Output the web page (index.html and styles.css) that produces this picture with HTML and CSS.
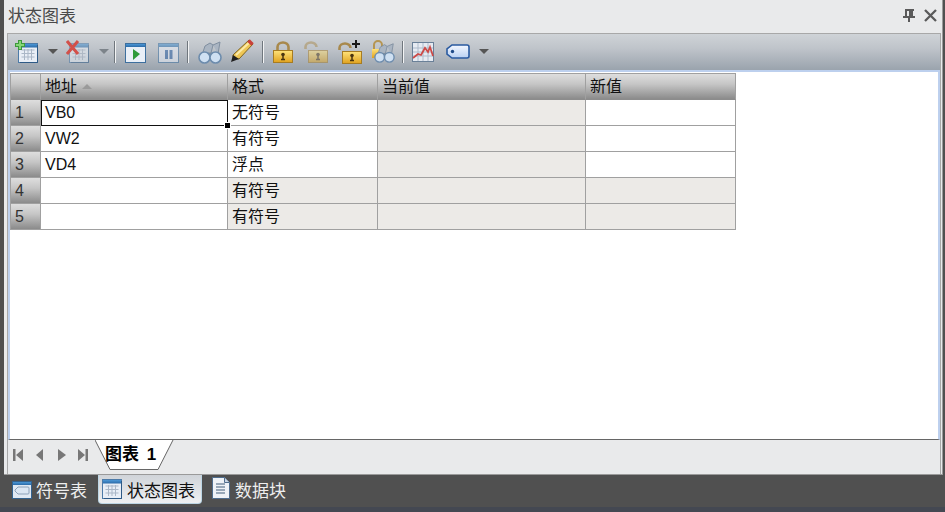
FILE: index.html
```html
<!DOCTYPE html>
<html lang="zh">
<head>
<meta charset="utf-8">
<title>状态图表</title>
<link rel="stylesheet" href="styles.css">
</head>
<body>
<svg class="defs" width="0" height="0">
  <defs>
    <linearGradient id="barBlue" x1="0" y1="0" x2="0" y2="1"><stop offset="0" stop-color="#4b97d6"/><stop offset="1" stop-color="#2a6aa8"/></linearGradient>
    <linearGradient id="gold" x1="0" y1="0" x2="0" y2="1"><stop offset="0" stop-color="#ffe27a"/><stop offset="1" stop-color="#e0a21e"/></linearGradient>
    <linearGradient id="tag" x1="0" y1="0" x2="0" y2="1"><stop offset="0" stop-color="#f4f8ff"/><stop offset="1" stop-color="#b9d0f2"/></linearGradient>
    <symbol id="grid" viewBox="0 0 20 20">
      <rect x="0.5" y="0.5" width="19" height="19" fill="#e8eef6" stroke="#4d7ba8"/>
      <rect x="1" y="1" width="18" height="3.500" fill="url(#barBlue)"/>
      <path d="M3.500 7h13M3.500 10.500h13M3.500 14h13M6.500 6v11M10 6v11M13.500 6v11" stroke="#aab7c7" fill="none"/>
      <path d="M19.500 2v17.500H2" stroke="#2e5a86" fill="none"/>
    </symbol>
    <symbol id="lock" viewBox="0 0 20 22">
      <path d="M4.500 10V6a5.500 4.500 0 0 1 11 0v4" fill="none" stroke="#a8894c" stroke-width="2.600"/>
      <rect x="0.500" y="9.500" width="19" height="12" fill="url(#gold)" stroke="#a77c22"/>
      <circle cx="10" cy="13.500" r="1.800" fill="#4a3410"/>
      <path d="M10 14v4M8 18.500h4" stroke="#4a3410" stroke-width="1.500"/>
    </symbol>
    <symbol id="openlock" viewBox="0 0 24 22">
      <path d="M1.500 8V6a5.500 4.500 0 0 1 11 0" fill="none" stroke="#a8894c" stroke-width="2.600"/>
      <rect x="4.500" y="9.500" width="19" height="12" fill="url(#gold)" stroke="#a77c22"/>
      <circle cx="14" cy="13.500" r="1.800" fill="#4a3410"/>
      <path d="M14 14v4M12 18.500h4" stroke="#4a3410" stroke-width="1.500"/>
    </symbol>
    <symbol id="binoc" viewBox="0 0 24 24">
      <path d="M4 15 7 6l5-3 3 2-2 8M20 14l2-12-7 3" fill="#aab5c2" stroke="#7f8e9f"/>
      <path d="M9 14h6" stroke="#7f8e9f" stroke-width="3"/>
      <circle cx="6.500" cy="17.500" r="5.500" fill="#cfe0f2" stroke="#6d8cad" stroke-width="1.600"/>
      <circle cx="17.500" cy="17.500" r="5.500" fill="#cfe0f2" stroke="#6d8cad" stroke-width="1.600"/>
    </symbol>
  </defs>
</svg>

<main class="panel">
  <header class="title-bar">
    <span class="title">状态图表</span>
    <span class="win-btns">
      <svg class="win-icon" viewBox="0 0 12 13"><path d="M2 0h9v2h-1v5h2v2H7v4H5V9H0V7h2V2H2zM4 2v5h2V2z" fill="#5a5a5a" fill-rule="evenodd"/></svg>
      <svg class="win-icon close" viewBox="0 0 13 13"><path d="M1 1l11 11M12 1 1 12" stroke="#5a5a5a" stroke-width="2.300"/></svg>
    </span>
  </header>

  <div class="frame">
    <div class="toolbar">
      <svg class="tb tb-add" viewBox="0 0 24 24"><use href="#grid" x="3" y="3" width="20" height="20"/><path d="M5 0v10M0 5h10" stroke="#3c9a3c" stroke-width="4"/><path d="M5 1v8M1 5h8" stroke="#86d676" stroke-width="2"/></svg>
      <span class="caret"></span>
      <svg class="tb tb-del" viewBox="0 0 24 24"><g opacity=".55"><use href="#grid" x="3" y="3" width="20" height="20"/></g><path d="M1 1l11 13M12 1 1 14" stroke="#d2504a" stroke-width="3"/></svg>
      <span class="caret dim"></span>
      <span class="sep sep-first"></span>
      <svg class="tb tb-run" viewBox="0 0 21 20"><rect x=".5" y=".5" width="20" height="19" fill="#e9eff7" stroke="#3d6f9e"/><rect x="1" y="1" width="19" height="3" fill="url(#barBlue)"/><path d="M8 6l7 5-7 6z" fill="#2e9a3a"/></svg>
      <svg class="tb tb-pause" viewBox="0 0 21 20"><g opacity=".55"><rect x=".5" y=".5" width="20" height="19" fill="#e9eff7" stroke="#3d6f9e"/><rect x="1" y="1" width="19" height="3" fill="url(#barBlue)"/><path d="M7 7h3v9H7zM11.500 7h3v9h-3z" fill="#2d62a3"/></g></svg>
      <span class="sep"></span>
      <svg class="tb tb-bin" viewBox="0 0 24 24"><use href="#binoc" width="24" height="24"/></svg>
      <svg class="tb tb-pen" viewBox="0 0 24 24"><path d="M19 1l4 4L9 20l-6-1 0-3z" fill="#eec655" stroke="#7d6220"/><path d="M6 16 20 3" stroke="#fbeaa8" stroke-width="2"/><path d="M18.500 1.500l4 4" stroke="#c9413a" stroke-width="3.500"/><path d="M3 16l6 4-8 3z" fill="#1f1f1f"/></svg>
      <span class="sep"></span>
      <svg class="tb tb-lock" viewBox="0 0 20 22"><use href="#lock" width="20" height="22"/></svg>
      <svg class="tb tb-unlock" viewBox="0 0 24 22"><g opacity=".5"><use href="#openlock" width="24" height="22"/></g></svg>
      <svg class="tb tb-lockadd" viewBox="0 0 24 24"><use href="#openlock" y="2" width="24" height="22"/><path d="M18 0v8M14 4h8" stroke="#1a1a1a" stroke-width="2"/></svg>
      <svg class="tb tb-lockbin" viewBox="0 0 24 24"><path d="M3 10V5a4 4 0 0 1 8 0v5" fill="none" stroke="#b59552" stroke-width="2"/><rect x="1" y="9" width="12" height="9" fill="url(#gold)"/><use href="#binoc" x="3" y="1" width="21" height="23"/></svg>
      <span class="sep sep-last"></span>
      <svg class="tb tb-chart" viewBox="0 0 22 20"><rect x=".5" y=".5" width="21" height="19" fill="#e6ebf2" stroke="#6a8098"/><path d="M1 6h20M1 10h20M1 14h20M6 1v18M11 1v18M16 1v18" stroke="#aebbcb" fill="none"/><path d="M1 16l5-4 3 1 4-7 3 4 2-5 3 9" stroke="#cd4a47" stroke-width="1.800" fill="none"/></svg>
      <svg class="tb tb-tag" viewBox="0 0 24 15"><path d="M6 1h15a2 2 0 0 1 2 2v9a2 2 0 0 1-2 2H6l-5-4V5z" fill="url(#tag)" stroke="#2a5aa0" stroke-width="1.600"/><circle cx="6.500" cy="7.500" r="1.700" fill="#1f4a88"/></svg>
      <span class="caret caret-end"></span>
    </div>

    <div class="sheet">
      <div class="grid">
        <div class="hd corner"></div>
        <div class="hd">地址<span class="sort"></span></div>
        <div class="hd">格式</div>
        <div class="hd">当前值</div>
        <div class="hd">新值</div>

        <div class="hd num">1</div>
        <div class="cell active">VB0</div>
        <div class="cell">无符号</div>
        <div class="cell off"></div>
        <div class="cell"></div>

        <div class="hd num">2</div>
        <div class="cell">VW2</div>
        <div class="cell">有符号</div>
        <div class="cell off"></div>
        <div class="cell"></div>

        <div class="hd num">3</div>
        <div class="cell">VD4</div>
        <div class="cell">浮点</div>
        <div class="cell off"></div>
        <div class="cell"></div>

        <div class="hd num">4</div>
        <div class="cell"></div>
        <div class="cell off">有符号</div>
        <div class="cell off"></div>
        <div class="cell off"></div>

        <div class="hd num">5</div>
        <div class="cell"></div>
        <div class="cell off">有符号</div>
        <div class="cell off"></div>
        <div class="cell off"></div>
      </div>
    </div>

    <div class="sheet-tabs">
      <div class="nav">
        <svg class="nav-icon" viewBox="0 0 12 12"><path d="M1 0h2.500v12H1zM11 0v12L4 6z" fill="#777"/></svg>
        <svg class="nav-icon" viewBox="0 0 12 12"><path d="M9 0v12L2 6z" fill="#777"/></svg>
        <svg class="nav-icon" viewBox="0 0 12 12"><path d="M2 0v12l8-6z" fill="#777"/></svg>
        <svg class="nav-icon" viewBox="0 0 12 12"><path d="M0 0v12l7-6zM7.500 0H10v12H7.500z" fill="#777"/></svg>
      </div>
      <div class="sheet-tab">
        <svg class="tab-shape" viewBox="0 0 80 30"><path d="M0 0 15 29.500H63L78 0" fill="#fff" stroke="#666"/><path d="M1 0H77" stroke="#fff" stroke-width="2"/></svg>
        <span class="sheet-tab-label">图表 1</span>
      </div>
    </div>
  </div>
</main>

<nav class="dock">
  <div class="dock-tab">
    <svg class="dock-icon" viewBox="0 0 20 18"><rect x=".5" y=".5" width="19" height="17" fill="#dfe8f3" stroke="#33628f"/><rect x="1" y="1" width="18" height="3" fill="url(#barBlue)"/><path d="M6 6h10a1 1 0 0 1 1 1v5a1 1 0 0 1-1 1H6L3 10V9z" fill="#dbe6f3" stroke="#8ba0b8"/></svg>
    符号表
  </div>
  <div class="dock-tab current">
    <svg class="dock-icon" viewBox="0 0 20 20"><use href="#grid" width="20" height="20"/></svg>
    状态图表
  </div>
  <div class="dock-tab last">
    <svg class="dock-icon doc" viewBox="0 0 18 22"><path d="M.5.500h12l5 5v16H.5z" fill="#eef2f7" stroke="#4f6d8e"/><path d="M12.500.5v5h5" fill="#c8d4e2" stroke="#4f6d8e"/><path d="M4 7h9M4 10h9M4 13h9M4 16h9" stroke="#7b8ea4" stroke-width="1.500"/></svg>
    数据块
  </div>
</nav>
</body>
</html>
```
FILE: styles.css
```css
* { box-sizing: border-box; }
html, body { margin: 0; padding: 0; }
body {
  width: 945px;
  height: 512px;
  overflow: hidden;
  background: #505050;
  color: #111;
  font-family: "Liberation Sans", "Noto Sans CJK SC", sans-serif;
  display: flex;
  flex-direction: column;
}
.defs { position: absolute; }

.panel {
  margin: 0 2px 0 4px;
  height: 475px;
  flex: none;
  background: #e9eaeb;
  border-right: 1px solid #9a9a9a;
  border-bottom: 1px solid #9a9a9a;
  display: flex;
  flex-direction: column;
}
.title-bar {
  height: 33px;
  flex: none;
  padding: 0 0 2px 4px;
  display: flex;
  align-items: center;
  justify-content: space-between;
}
.title { font-size: 17px; color: #4a4a4a; line-height: 24px; margin-top: 2px; }
.win-btns { display: flex; align-items: center; gap: 9px; padding-right: 5px; }
.win-icon { width: 12px; height: 13px; display: block; }
.win-icon.close { width: 13px; }

.frame {
  flex: 1;
  margin: 0 1px 0 3px;
  border: 1px solid #a8a8a8;
  border-width: 1px 1px 0 1px;
  display: flex;
  flex-direction: column;
  min-height: 0;
}
.toolbar {
  height: 36px;
  flex: none;
  display: flex;
  align-items: flex-start;
  padding: 6px 0 0 7px;
  background: linear-gradient(#cfd3d7, #bfc4ca 40%, #9aa3ad);
}
.tb { display: block; flex: none; filter: blur(0.3px); }
.tb-add { width: 24px; height: 24px; }
.tb-del { width: 24px; height: 24px; margin-left: 8px; }
.tb-run { width: 21px; height: 20px; margin-top: 3px; }
.tb-pause { width: 21px; height: 20px; margin: 3px 0 0 12px; }
.tb-bin { width: 24px; height: 24px; }
.tb-pen { width: 24px; height: 24px; margin: -1px 0 0 8px; }
.tb-lock { width: 20px; height: 22px; margin-top: 1px; }
.tb-unlock { width: 24px; height: 22px; margin: 1px 0 0 11px; }
.tb-lockadd { width: 24px; height: 24px; margin: 0 0 0 10px; }
.tb-lockbin { width: 24px; height: 24px; margin-left: 9px; }
.tb-chart { width: 22px; height: 20px; margin-top: 2px; }
.tb-tag { width: 24px; height: 15px; margin: 4px 0 0 12px; }
.caret {
  flex: none;
  margin: 9px 0 0 9px;
  border-style: solid;
  border-width: 5px 5px 0 5px;
  border-color: #555 transparent transparent;
}
.caret.dim { border-top-color: #7c838a; }
.sep {
  flex: none;
  width: 2px;
  height: 22px;
  margin: 1px 9px 0 8px;
  background: linear-gradient(90deg, #6f767d 50%, #f2f3f4 50%);
}
.sep-first { margin-left: 5px; }
.sep-last { margin-left: 7px; margin-right: 8px; }

.sheet {
  flex: 1;
  min-height: 0;
  background: #fff;
  border: 2px solid #bdd0ee;
  border-bottom: 1px solid #666;
  padding-top: 1px;
}
.grid {
  display: grid;
  grid-template-columns: 30px 187px 150px 208px 150px;
  grid-auto-rows: 26px;
  width: 726px;
  border-top: 1px solid #a0a0a0;
  border-left: 1px solid #a0a0a0;
  font-size: 16px;
  line-height: 25px;
}
.hd {
  background: linear-gradient(#dedede, #c6c6c6 40%, #8b8b8b);
  border-right: 1px solid #a0a0a0;
  border-bottom: 1px solid #8c8c8c;
  padding-left: 4px;
  display: flex;
  align-items: center;
  height: 26px;
}
.hd.num { padding-left: 4px; color: #333; border-bottom-color: #a0a0a0; }
.sort {
  margin-left: 5px;
  border-style: solid;
  border-width: 0 5px 5px 5px;
  border-color: transparent transparent #9a9a9a;
}
.cell {
  background: #fff;
  border-right: 1px solid #a0a0a0;
  border-bottom: 1px solid #a0a0a0;
  padding-left: 4px;
  white-space: nowrap;
}
.cell.off { background: #eceae7; }
.cell.active { position: relative; outline: 1px solid #111; outline-offset: -1px; border: 0; }
.cell.active::after {
  content: "";
  position: absolute;
  right: -3px;
  bottom: -3px;
  width: 5px;
  height: 5px;
  background: #000;
  border: 1px solid #fff;
}

.sheet-tabs {
  height: 34px;
  flex: none;
  display: flex;
  align-items: flex-start;
}
.nav { display: flex; gap: 10px; padding: 9px 0 0 4px; width: 87px; flex: none; }
.nav-icon { width: 12px; height: 12px; display: block; flex: none; filter: blur(0.4px); }
.sheet-tab { position: relative; width: 80px; height: 30px; flex: none; }
.tab-shape { position: absolute; inset: 0; width: 80px; height: 30px; }
.sheet-tab-label {
  position: absolute;
  left: 10px;
  top: 3px;
  font-size: 17px;
  word-spacing: 3px;
  font-weight: 700;
  color: #000;
  white-space: nowrap;
  line-height: 24px;
}

.dock {
  flex: 1;
  padding-left: 12px;
  display: flex;
  align-items: flex-start;
  font-size: 17px;
  color: #eee;
  background: linear-gradient(#505050 32px, #444852 32px);
}
.dock-tab {
  height: 29px;
  display: flex;
  align-items: center;
  gap: 4px;
  white-space: nowrap;
}
.dock-tab.current {
  color: #111;
  background: linear-gradient(#d0d4d9, #eef0f2);
  border: 1px solid #bcd5e4;
  border-top: 0;
  border-radius: 0 0 4px 4px;
  padding: 0 6px 0 3px;
  margin-left: 11px;
  gap: 5px;
}
.dock-tab.last { margin-left: 10px; gap: 5px; }
.dock-icon { width: 20px; height: 18px; display: block; flex: none; }
.dock-tab.current .dock-icon { height: 20px; }
.dock-icon.doc { width: 18px; height: 22px; margin-top: -4px; }
```
